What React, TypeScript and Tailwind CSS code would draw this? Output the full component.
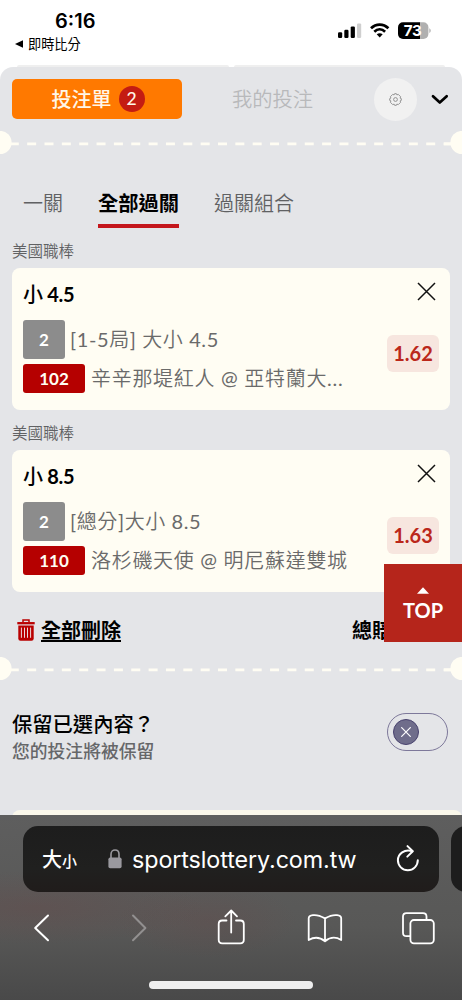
import React from "react";

const CJK = "font-['Lato','Noto_Sans_CJK_TC',sans-serif]";

function Perforation() {
  return (
    <div className="relative h-6 w-full shrink-0 overflow-hidden">
      <svg className="block h-6 w-full" viewBox="0 0 462 24">
        <line x1="9.8" y1="12.8" x2="462" y2="12.8" stroke="#fffdf3" strokeWidth="2.8" strokeDasharray="9 8.35" />
        <circle cx="0" cy="11.5" r="11.6" fill="#fffdf3" />
        <circle cx="462" cy="11.5" r="11.6" fill="#fffdf3" />
        <line x1="444" y1="12.8" x2="453" y2="12.8" stroke="#fffdf3" strokeWidth="2.8" />
      </svg>
    </div>
  );
}

interface Bet {
  title: string;
  market: string;
  code: string;
  match: string;
  odds: string;
}

const bets: Bet[] = [
  { title: "小 4.5", market: "[1-5局] 大小 4.5", code: "102", match: "辛辛那堤紅人 @ 亞特蘭大...", odds: "1.62" },
  { title: "小 8.5", market: "[總分]大小 8.5", code: "110", match: "洛杉磯天使 @ 明尼蘇達雙城", odds: "1.63" },
];

// Latin runs keep the regular weight; the at sign is raised to sit centred beside CJK glyphs.
function MixedText({ text }: { text: string }) {
  return (
    <>
      {text.split(/(@|[\x20-\x3f\x41-\x7e]+)/).map((part, i) => {
        if (part === "@") return <span key={i} className="relative -top-px font-normal">{part}</span>;
        if (/^[\x20-\x7e]+$/.test(part)) return <span key={i} className="font-normal">{part}</span>;
        return <span key={i}>{part}</span>;
      })}
    </>
  );
}

function BetCard({ bet }: { bet: Bet }) {
  return (
    <section className="flex flex-col pb-[9px]">
      <div className="flex h-[31px] items-center pl-[12px] pb-[1px] text-[15.5px] font-[350] text-[#606163]">美國職棒</div>
      <div className="mx-[12px] flex h-[142px] w-[438px] flex-col rounded-lg bg-[#fffdf3] pl-[11px] pr-[11px]">
        <div className="flex h-[52px] items-center justify-between">
          <span className="text-[20px] font-bold tracking-[-0.3px] text-black">
            <span className="font-medium">{bet.title.slice(0, 1)}</span>
            {bet.title.slice(1)}
          </span>
          <svg className="mt-[-5px] mr-[3px] size-[19px]" viewBox="0 0 19 19" fill="none" stroke="#111" strokeWidth="1.5">
            <path d="M1 1 18 18M18 1 1 18" />
          </svg>
        </div>
        <div className="flex justify-between">
          <div className="flex flex-col gap-[5px] text-[20px] font-[350] text-[#6a6a6a]">
            <div className="flex h-[39px] items-center gap-[5px]">
              <span className="flex h-[39px] w-[42px] items-center justify-center rounded-[3px] bg-[#8c8c8c] text-[17px] font-bold text-white">2</span>
              <span className="mt-[-2px] tracking-[0.6px] whitespace-pre"><MixedText text={bet.market} /></span>
            </div>
            <div className="flex h-[29px] items-center gap-[6px]">
              <span className="flex h-[29px] w-[62px] items-center justify-center rounded-[3px] bg-[#b50000] text-[17px] font-bold text-[#fffdf3]">{bet.code}</span>
              <span className="mt-[-2px] tracking-[0.7px] whitespace-pre"><MixedText text={bet.match} /></span>
            </div>
          </div>
          <div className="mt-[15px] flex h-[37px] w-[52px] items-center justify-center rounded-[6px] bg-[#f7e6df] pb-[1px] text-[20px] font-bold text-[#bb271a]">
            {bet.odds}
          </div>
        </div>
      </div>
    </section>
  );
}

function StatusBar() {
  return (
    <header className="flex h-[65px] shrink-0 items-start justify-between text-black">
      <div className="flex flex-col">
        <div className="mt-[9px] ml-[55px] h-[25px] font-['Inter',sans-serif] text-[20px] leading-[25px] font-semibold">6:16</div>
        <div className="ml-[15px] flex h-5 items-center gap-[5px] font-['Noto_Sans_CJK_TC',sans-serif] text-[13.2px]">
          <svg className="size-[8px]" viewBox="0 0 8 8"><path d="M0 4 8 0.2V7.8Z" /></svg>
          即時比分
        </div>
      </div>
      <div className="mt-[22px] mr-[31px] flex h-[17px] items-center">
        <svg className="h-[17px] w-[94px]" viewBox="337 22 94 17">
          <rect x="338" y="32.3" width="4.2" height="5.7" rx="1.2" />
          <rect x="344.3" y="29.8" width="4.2" height="8.2" rx="1.2" />
          <rect x="350.7" y="26.4" width="4.2" height="11.6" rx="1.2" />
          <rect x="357" y="23.4" width="4.2" height="14.6" rx="1.2" fill="#cfcfcf" />
          <g fill="none" stroke="#000" strokeWidth="2.7">
            <path d="M371 28.3C376 23.3 383.4 23.3 388.4 28.3" />
            <path d="M374.3 31.7C377.5 28.7 381.9 28.7 385.1 31.7" />
          </g>
          <path d="M376.7 34.3Q379.7 32 382.7 34.3L379.7 37.6Z" />
          <clipPath id="battery"><rect x="398" y="22.2" width="30.4" height="16.8" rx="5" /></clipPath>
          <g clipPath="url(#battery)">
            <rect x="398" y="22" width="22.2" height="17" />
            <rect x="420.2" y="22" width="9" height="17" fill="#b0b0b0" />
          </g>
          <path d="M429.3 28.2C431.2 29 431.2 32.2 429.3 33Z" fill="#b0b0b0" />
          <text x="412.6" y="36" textAnchor="middle" fill="#fff" fontFamily="Inter" fontSize="15.2" fontWeight="700" letterSpacing="-0.3">73</text>
        </svg>
      </div>
    </header>
  );
}

function BrowserBar() {
  return (
    <footer className="flex h-[185px] shrink-0 flex-col bg-[radial-gradient(ellipse_at_8%_50%,#6b44444d,transparent_28%),radial-gradient(ellipse_at_45%_57%,#6b44443d,transparent_25%),linear-gradient(#5e5e5e,#585857_60%,#494949)]">
      <div className="mt-[11px] flex h-[66px] gap-[12px] overflow-hidden pl-[23px]">
        <div className="flex h-[66px] w-[416px] shrink-0 items-center rounded-[15px] bg-[linear-gradient(#1d1d1d,#20201f_65%,#201c1b)] pl-[19px] text-white">
          <div className="flex w-[65px] items-baseline pt-[2px] font-['Noto_Sans_CJK_TC',sans-serif] leading-8 font-medium">
            <span className="text-[20px]">大</span>
            <span className="text-[15px]">小</span>
          </div>
          <svg className="mt-[-1px] ml-[1px] h-[20px] w-[14px]" viewBox="0 0 14 20">
            <path d="M3 10V5.3C3 -.4 11 -.4 11 5.3V10" fill="none" stroke="#9a999f" strokeWidth="1.6" />
            <rect x=".4" y="8.5" width="13.2" height="10.7" rx="1.8" fill="#9a999f" />
          </svg>
          <span className="ml-[10px] w-[264px] pt-[2px] font-['Inter',sans-serif] text-[23.3px] tracking-[-0.09px]">sportslottery.com.tw</span>
          <svg className="mt-[-3px] h-[28px] w-[24px]" viewBox="0 0 24 28" fill="none" stroke="#fff" strokeWidth="2" strokeLinecap="round" strokeLinejoin="round">
            <path d="M16.3 7.2C8.5 4.6 1.9 9.8 1.9 16.3A9.95 9.95 0 0 0 21.8 16.3" />
            <path d="M11.5 2.1 16.8 7.3 11.3 12.6" />
          </svg>
        </div>
        <div className="h-[66px] w-[50px] shrink-0 rounded-[15px] bg-[#1d1d1d]" />
      </div>
      <svg className="h-[72px] w-full" viewBox="0 892 462 72" fill="none" stroke="#fff" strokeWidth="2" strokeLinecap="round" strokeLinejoin="round">
        <path d="M48 915.5 35.2 928 48 940.2" />
        <path d="M133 915.5 145.4 928 133 940.2" stroke="#929090" />
        <path d="M226.5 920.5H222.2Q218.7 920.5 218.7 924V939.8Q218.7 943.3 222.2 943.3H240.3Q243.8 943.3 243.8 939.8V924Q243.8 920.5 240.3 920.5H236M231.2 932.5V910.8M225.3 916.3 231.2 910.5 237 916.3" strokeWidth="1.8" />
        <path d="M325 918.4C314.5 912.5 308.7 915.8 308.7 918.3V940C314 936.8 319.8 937 325 941.2 330.2 937 336 936.8 341.2 940V918.3C341.2 915.8 335.5 912.5 325 918.4V941.2" strokeWidth="1.8" />
        <path d="M410 936.2H406.5Q403 936.2 403 932.7V916.6Q403 913.1 406.5 913.1H423Q426.5 913.1 426.5 916.6V920" strokeWidth="1.8" />
        <rect x="410.4" y="920" width="23.4" height="23.3" rx="3.5" strokeWidth="1.8" />
      </svg>
      <div className="ml-[149px] mt-[17px] h-[8px] w-[164px] rounded-full bg-[#eeeeee]" />
    </footer>
  );
}

export default function App() {
  return (
    <div className={`relative flex h-[1000px] w-[462px] flex-col overflow-hidden bg-white ${CJK}`} lang="zh-Hant">
      <StatusBar />
      <div className="flex h-[2px] shrink-0 gap-[5px] pl-[17px]">
        <div className="w-[212px] rounded-t-[4px] bg-[#efefef]" />
        <div className="w-[211px] rounded-t-[4px] bg-[#efefef]" />
      </div>
      <main className="flex h-[748px] shrink-0 flex-col overflow-hidden rounded-t-[13px] bg-[#e4e5e8]">
        <div className="flex h-[64px] shrink-0 items-center pl-[12px]">
          <button className="flex h-[40px] w-[170px] items-center justify-center gap-[7px] rounded-[5px] bg-[#ff7900] pl-[2px] text-[20px] font-medium text-[#fff7e8]">
            <span>投注單</span>
            <span className="flex size-[26px] items-center justify-center rounded-full bg-[#c41c12] pt-px text-[17.5px]">2</span>
          </button>
          <button className="ml-[50px] w-[142px] text-left text-[20.3px] font-[350] text-[#b8b9bb]">我的投注</button>
          <button className="flex size-[43px] items-center justify-center rounded-full bg-[#f1f1f1]">
            <svg className="size-[13px]" viewBox="0 0 13 13" fill="none" stroke="#8a8a8a" strokeWidth=".9">
              <path d="M5.1 1.9 5.6 .7H7.4L7.9 1.9 9.3 1.4 11.6 3.7 11.1 5.1 12.3 5.6V7.4L11.1 7.9 11.6 9.3 9.3 11.6 7.9 11.1 7.4 12.3H5.6L5.1 11.1 3.7 11.6 1.4 9.3 1.9 7.9 .7 7.4V5.6L1.9 5.1 1.4 3.7 3.7 1.4Z" />
              <circle cx="6.5" cy="6.5" r="1.9" />
            </svg>
          </button>
          <svg className="ml-[14px] mt-[2px] h-[12px] w-[18px]" viewBox="0 0 18 12" fill="none" stroke="#000" strokeWidth="2.7" strokeLinecap="round" strokeLinejoin="round">
            <path d="M2 2.2 8.8 8.5 15.7 2.2" />
          </svg>
        </div>
        <Perforation />
        <nav className="mt-[25px] flex h-[48px] shrink-0 gap-[35px] pl-[23px] text-[20px] text-[#606163]">
          <div className="h-[48px] leading-[46px] font-[350]">一關</div>
          <div className="h-[48px] border-b-[4.5px] border-[#c4161c] text-[20.25px] leading-[46px] font-bold text-black">全部過關</div>
          <div className="h-[48px] leading-[46px] font-[350]">過關組合</div>
        </nav>
        <div className="flex shrink-0 flex-col pt-[9px]">
          {bets.map((bet) => <BetCard key={bet.code} bet={bet} />)}
        </div>
        <div className="flex h-[56px] shrink-0 items-center pt-[2px] pl-[17px] text-[20px] font-bold text-black">
          <svg className="h-[22px] w-[18px]" viewBox="0 0 18 22" fill="none" stroke="#b90000">
            <path d="M.3 4.2H17.7" strokeWidth="2.3" />
            <path d="M6 3.3V1H12V3.3" strokeWidth="1.5" />
            <path d="M1.3 6.6H16.7V19.6Q16.7 21.8 14.5 21.8H3.5Q1.3 21.8 1.3 19.6Z" fill="#b90000" stroke="none" />
            <path d="M4.4 8.6V18.8M7.5 8.6V18.8M10.5 8.6V18.8M13.6 8.6V18.8" stroke="#eadadb" strokeWidth="1" />
          </svg>
          <span className="ml-[6px] w-[311px]"><span className="underline decoration-[1.5px] underline-offset-[2px]">全部刪除</span></span>
          <span className="whitespace-nowrap">總賠率</span>
        </div>
        <Perforation />
        <div className="mt-[29px] flex h-[100px] shrink-0 justify-between pr-[14px] pl-[12px]">
          <div className="flex flex-col">
            <div className="h-[28px] text-[20.3px] leading-[28px] font-medium text-black">保留已選內容？</div>
            <div className="h-[26px] text-[17.8px] leading-[26px] font-medium text-[#666769]">您的投注將被保留</div>
          </div>
          <div className="mt-[3px] flex h-[38px] w-[61px] items-center rounded-full border-[1.5px] border-[#7d789a] pl-[5px]">
            <div className="flex size-[26px] items-center justify-center rounded-full border border-[#48426e] bg-[#6f6d8b]">
              <svg className="size-[10px]" viewBox="0 0 10 10" fill="none" stroke="#fff" strokeWidth="1.2"><path d="M.3.3 9.7 9.7M9.7.3.3 9.7" /></svg>
            </div>
          </div>
        </div>
        <div className="ml-[12px] h-[20px] shrink-0 rounded-t-[8px] bg-[#faf7ea]" />
      </main>
      <BrowserBar />
      <button className="absolute top-[564px] left-[384px] flex h-[78px] w-[78px] flex-col items-center bg-[#b5251b] pt-[23px] text-[20px] leading-[24px] font-bold text-white">
        <svg className="mb-[4px] h-[7px] w-[12px] shrink-0" viewBox="0 0 12 7" fill="#fff"><path d="M6 .3 12 6.7H0Z" /></svg>
        TOP
      </button>
    </div>
  );
}
